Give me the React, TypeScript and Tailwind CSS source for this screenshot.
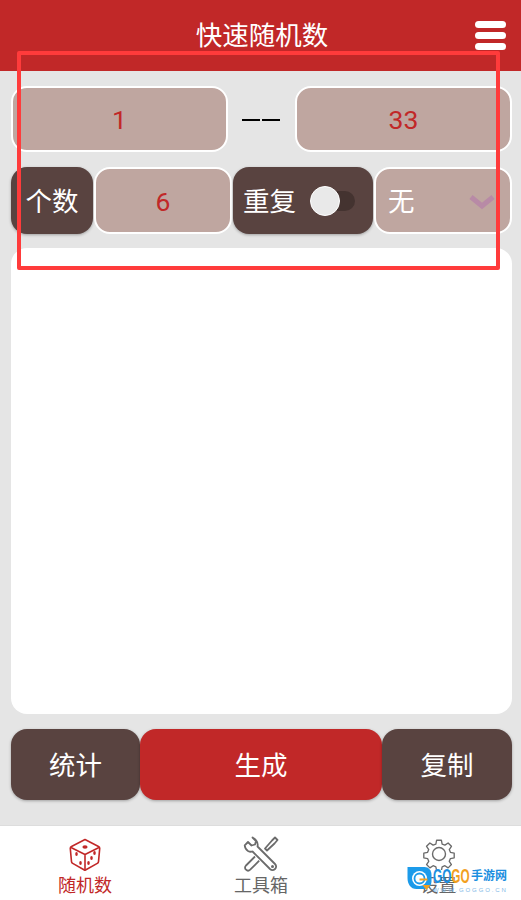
const cjk = { fontFamily: '"Roboto", "Noto Sans CJK SC", sans-serif' };

function Dice() {
  return (
    <svg width="32" height="33" viewBox="0 0 32 33" fill="none" stroke="#c12828" strokeWidth="1.6" strokeLinejoin="round">
      <path d="M16 1.5 29.5 8.5c.8.4 1.3 1.2 1.2 2.1l-1.2 13c-.1.8-.5 1.4-1.2 1.8L16.5 32c-.4.2-.8.2-1.1 0L3.7 25.4c-.7-.4-1.1-1-1.2-1.8L1.3 10.6c-.1-.9.4-1.7 1.2-2.1z" />
      <path d="M2 9.5 16 16.5 30 9.5M16 16.5V31.5" />
      <g fill="#c12828" stroke="none">
        <ellipse cx="16" cy="9" rx="2.6" ry="1.8" />
        <ellipse cx="7.5" cy="16" rx="1.3" ry="1.9" />
        <ellipse cx="11.5" cy="25" rx="1.3" ry="1.9" />
        <ellipse cx="25.5" cy="15" rx="1.3" ry="1.9" />
        <ellipse cx="22.5" cy="20" rx="1.3" ry="1.9" />
        <ellipse cx="19.5" cy="25" rx="1.3" ry="1.9" />
      </g>
    </svg>
  );
}

function Tools() {
  return (
    <svg width="36" height="36" viewBox="0 0 36 36" fill="none" stroke="#6b6b6b" strokeWidth="1.8" strokeLinejoin="round">
      <path d="M9.5 1.5 13 5l-1 3.5-3.5 1L5 6 1.7 9.3c.2 2.6 1.4 4.5 3.3 5.7 1.5.8 3 .9 4.5.5L27 33c1.5 1.4 3.5 1.4 5 0s1.5-3.5 0-5L14.5 10.5c.5-2 .1-4.2-1.3-6-1-1.3-2.2-2.3-3.7-3z" />
      <path d="M22 12.5 29 4.5l3-3 2.5 2.5-3 3.5-7.5 7zM12 20.5 3 29.5c-1.3 1.4-1.3 3 0 4.2 1.2 1.2 2.9 1.2 4.2 0l9-9" />
      <circle cx="29.5" cy="30.5" r="1.5" fill="#6b6b6b" stroke="none" />
    </svg>
  );
}

function Gear() {
  return (
    <svg width="32" height="32" viewBox="0 0 32 32" fill="none" stroke="#6b6b6b" strokeWidth="1.4" strokeLinejoin="round">
      <path d="M13.5 1.5h5l.8 4 2.9 1.2 3.4-2.3 3.500 3.500-2.300 3.400 1.200 2.900 4 .8v5l-4 .8-1.200 2.900 2.300 3.400-3.500 3.500-3.400-2.300-2.900 1.200-.8 4h-5l-.8-4-2.900-1.200-3.400 2.300-3.500-3.500 2.300-3.400-1.200-2.900-4-.8v-5l4-.8 1.200-2.900-2.300-3.400 3.500-3.500 3.400 2.300 2.900-1.200z" transform="translate(.8 .8) scale(.95)" />
      <circle cx="16" cy="16" r="6.5" />
    </svg>
  );
}

function NavItem({ icon, label, active }: { icon: React.ReactNode; label: string; active?: boolean }) {
  return (
    <div className="flex flex-col items-center">
      <div className="flex h-[36px] items-center justify-center">{icon}</div>
      <div className={`mt-[2px] text-[18px] leading-[24px] ${active ? "text-[#c12828]" : "text-[#666666]"}`}>{label}</div>
    </div>
  );
}

function Watermark() {
  return (
    <div className="absolute left-[406px] top-[866px] flex w-[101px] items-start whitespace-nowrap">
      <svg className="shrink-0" width="27" height="26" viewBox="0 0 26 26">
        <path d="M1 1h17c4 0 7 3 7 8v6c0 5-3 8-7 8h-8C4 23 1 18 1 12z" fill="#1c9bea" />
        <circle cx="13" cy="12.5" r="7.5" fill="#ffffff" />
        <circle cx="13" cy="12.5" r="5" fill="none" stroke="#1c9bea" strokeWidth="1.8" />
        <path d="M13 12.5h8v2h-8z" fill="#f2a01e" />
        <path d="M16 19h8l-4 5z" fill="#f2a01e" />
      </svg>
      <div className="flex flex-col">
        <div className="flex h-[20px] items-center font-bold leading-[20px]" style={{ fontFamily: '"Liberation Sans", "Noto Sans CJK SC", sans-serif' }}>
          <div className="w-[38px]">
            <div className="origin-left scale-x-[0.56] text-[21px]">
              <span className="text-[#1c8fe0]">GO</span>
              <span className="text-[#f2a01e]">GO</span>
            </div>
          </div>
          <span className="text-[12px] text-[#1c8fe0]">手游网</span>
        </div>
        <div className="text-[6px] leading-[8px] tracking-[1.9px] text-[#7fb8e6]" style={{ fontFamily: '"Liberation Sans", sans-serif' }}>WWW.GOGGO.CN</div>
      </div>
    </div>
  );
}

export default function App() {
  const inputBox = "flex items-center justify-center rounded-[16px] border-2 border-white bg-[#bfa6a0] pt-[2px] text-[26.5px] text-[#c12828]";
  const darkBtn = "flex items-center justify-center rounded-[16px] bg-[#594340] text-[26.5px] text-white shadow-[0_1px_3px_rgba(0,0,0,0.3)]";

  return (
    <div className="relative flex h-[900px] w-[521px] flex-col overflow-hidden bg-[#e5e5e5]" style={cjk}>
      <header className="relative flex h-[71px] shrink-0 items-center justify-center bg-[#c12828] pl-[3px] text-[26.5px] text-white">
        <span>快速随机数</span>
        <div className="absolute left-[475px] top-[21px] flex w-[31px] flex-col gap-[4px]">
          <div className="h-[7px] rounded-full bg-white" />
          <div className="h-[7px] rounded-full bg-white" />
          <div className="h-[7px] rounded-full bg-white" />
        </div>
      </header>

      <main className="flex flex-1 flex-col pl-[11px] pr-[9px] pt-[15px]">
        <div className="flex h-[66px] items-center">
          <div className={`${inputBox} h-full w-[217px]`}>1</div>
          <div className="flex flex-1 justify-center gap-[2px] pr-[2px] pt-[2px]">
            <div className="h-[2px] w-[18px] bg-black" />
            <div className="h-[2px] w-[18px] bg-black" />
          </div>
          <div className={`${inputBox} h-full w-[217px]`}>33</div>
        </div>

        <div className="mt-[15px] flex h-[67px] gap-[1px]">
          <div className={`${darkBtn} w-[82px] pt-[2px]`}>个数</div>
          <div className={`${inputBox} w-[138px]`}>6</div>
          <div className="flex w-[140px] items-center rounded-[16px] bg-[#594340] pl-[10px] pt-[2px] text-[26.5px] text-white shadow-[0_1px_3px_rgba(0,0,0,0.3)]">
            重复
            <div className="relative mb-[2px] ml-[14px] h-[20px] w-[45px] shrink-0 rounded-full bg-[#443330]">
              <div className="absolute left-0 top-[-5px] h-[30px] w-[30px] rounded-full border border-white bg-[#e9e9e9]" />
            </div>
          </div>
          <div className="flex flex-1 items-center justify-between rounded-[16px] border-2 border-white bg-[#bfa6a0] pl-[12px] pr-[15px] pt-[2px] text-[26.5px] text-white">
            无
            <svg width="26" height="16" viewBox="0 0 26 16" fill="none" stroke="#b88aa6" strokeWidth="5">
              <path d="M2 3 13 12 24 3" />
            </svg>
          </div>
        </div>

        <div className="mt-[14px] h-[466px] rounded-[16px] bg-white" />

        <div className="mt-[15px] flex h-[71px]">
          <button className={`${darkBtn} w-[129px] pt-[3px]`}>统计</button>
          <button className="flex flex-1 items-center justify-center rounded-[16px] bg-[#c12828] pt-[3px] text-[26.5px] text-white shadow-[0_1px_3px_rgba(0,0,0,0.3)]">生成</button>
          <button className={`${darkBtn} w-[130px] pt-[3px]`}>复制</button>
        </div>
      </main>

      <nav className="flex h-[75px] shrink-0 border-t border-[#dddddd] bg-white pt-[10px]">
        <div className="flex w-[170px] justify-center"><NavItem icon={<Dice />} label="随机数" active /></div>
        <div className="flex flex-1 justify-center pr-[4px]"><NavItem icon={<Tools />} label="工具箱" /></div>
        <div className="flex w-[165px] justify-center"><NavItem icon={<Gear />} label="设置" /></div>
      </nav>

      <Watermark />

      {/* annotation drawn over the page */}
      <div className="pointer-events-none absolute left-[17px] top-[51px] h-[219px] w-[483px] rounded-[2px] border-[4px] border-[#ff3b3b]" />
    </div>
  );
}
